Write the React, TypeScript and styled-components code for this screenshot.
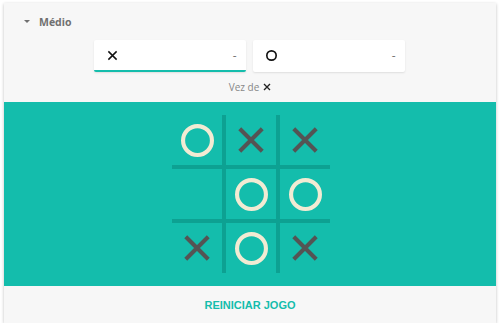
import React, { useState } from 'react';
import styled, { createGlobalStyle } from 'styled-components';

const GlobalStyle = createGlobalStyle`
  * {
    box-sizing: border-box;
  }

  body {
    margin: 0;
    padding: 0;
    background: #fff;
    font-family: "Open Sans", "Noto Sans", sans-serif;
  }
`;

const Page = styled.div`
  padding: 3px 4px 0 4px;
`;

const Card = styled.div`
  width: 492px;
  background: #f7f7f7;
  box-shadow: 0 1px 3px rgba(0, 0, 0, 0.25);
  display: flex;
  flex-direction: column;
`;

const Header = styled.div`
  height: 37px;
  display: flex;
  align-items: center;
  padding: 0 0 0 20px;
  gap: 9px;
  font-size: 10.5px;
  font-weight: 700;
  color: #707070;
`;

const Caret = styled.span`
  width: 0;
  height: 0;
  border-left: 3px solid transparent;
  border-right: 3px solid transparent;
  border-top: 3px solid #707070;
`;

const Players = styled.div`
  display: flex;
  justify-content: center;
  gap: 7px;
  margin-left: -2px;
`;

const PlayerBox = styled.div<{ $active?: boolean }>`
  width: 152px;
  height: 32px;
  background: #fff;
  border-radius: 2px;
  box-shadow: 0 1px 2px rgba(0, 0, 0, 0.1);
  border-bottom: 2px solid ${(p) => (p.$active ? '#14bdac' : 'transparent')};
  display: flex;
  align-items: center;
  justify-content: space-between;
  padding: 0 9px 0 13px;
`;

const Score = styled.span`
  font-size: 12px;
  color: #777;
`;

const Turn = styled.div`
  height: 30px;
  display: flex;
  align-items: center;
  justify-content: center;
  gap: 4px;
  font-size: 10px;
  color: #888;
  padding-bottom: 1px;
`;

const Field = styled.div`
  background: #14bdac;
  height: 184px;
  display: flex;
  justify-content: center;
  align-items: center;
  padding-bottom: 10px;
`;

const Board = styled.div`
  display: grid;
  grid-template-columns: repeat(3, 50px);
  grid-template-rows: repeat(3, 50px);
  gap: 4px;
  background: #0da192;
  margin-left: 2px;
  margin-top: 10px;
`;

const Cell = styled.div`
  background: #14bdac;
  display: flex;
  align-items: center;
  justify-content: center;
`;

const Footer = styled.div`
  height: 37px;
  display: flex;
  align-items: center;
  justify-content: center;
  padding-top: 1px;
  font-family: "Liberation Sans", Arial, sans-serif;
  font-size: 11px;
  font-weight: 700;
  color: #14bdac;
`;

const Cross = ({ size, stroke, color }: { size: number; stroke: number; color: string }) => (
  <svg width={size} height={size} viewBox="0 0 24 24">
    <path d="M3 3 L21 21 M21 3 L3 21" stroke={color} strokeWidth={stroke} fill="none" />
  </svg>
);

const Ring = ({ size, stroke, color }: { size: number; stroke: number; color: string }) => (
  <svg width={size} height={size} viewBox="0 0 24 24">
    <circle cx="12" cy="12" r={12 - stroke / 2} stroke={color} strokeWidth={stroke} fill="none" />
  </svg>
);

type Mark = 'x' | 'o' | '';

const App = () => {
  const [board] = useState<Mark[]>(['o', 'x', 'x', '', 'o', 'o', 'x', 'o', 'x']);

  return (
    <>
      <GlobalStyle />
      <Page>
        <Card>
          <Header>
            <Caret />
            <span>Médio</span>
          </Header>
          <Players>
            <PlayerBox $active>
              <Cross size={11} stroke={3.2} color="#111" />
              <Score>-</Score>
            </PlayerBox>
            <PlayerBox>
              <Ring size={11} stroke={3.6} color="#111" />
              <Score>-</Score>
            </PlayerBox>
          </Players>
          <Turn>
            <span>Vez de</span>
            <Cross size={8} stroke={4} color="#222" />
          </Turn>
          <Field>
            <Board>
              {board.map((m, i) => (
                <Cell key={i}>
                  {m === 'x' && <Cross size={30} stroke={3.3} color="#545454" />}
                  {m === 'o' && <Ring size={33} stroke={3} color="#f2ebd3" />}
                </Cell>
              ))}
            </Board>
          </Field>
          <Footer>REINICIAR JOGO</Footer>
        </Card>
      </Page>
    </>
  );
};

export default App;
